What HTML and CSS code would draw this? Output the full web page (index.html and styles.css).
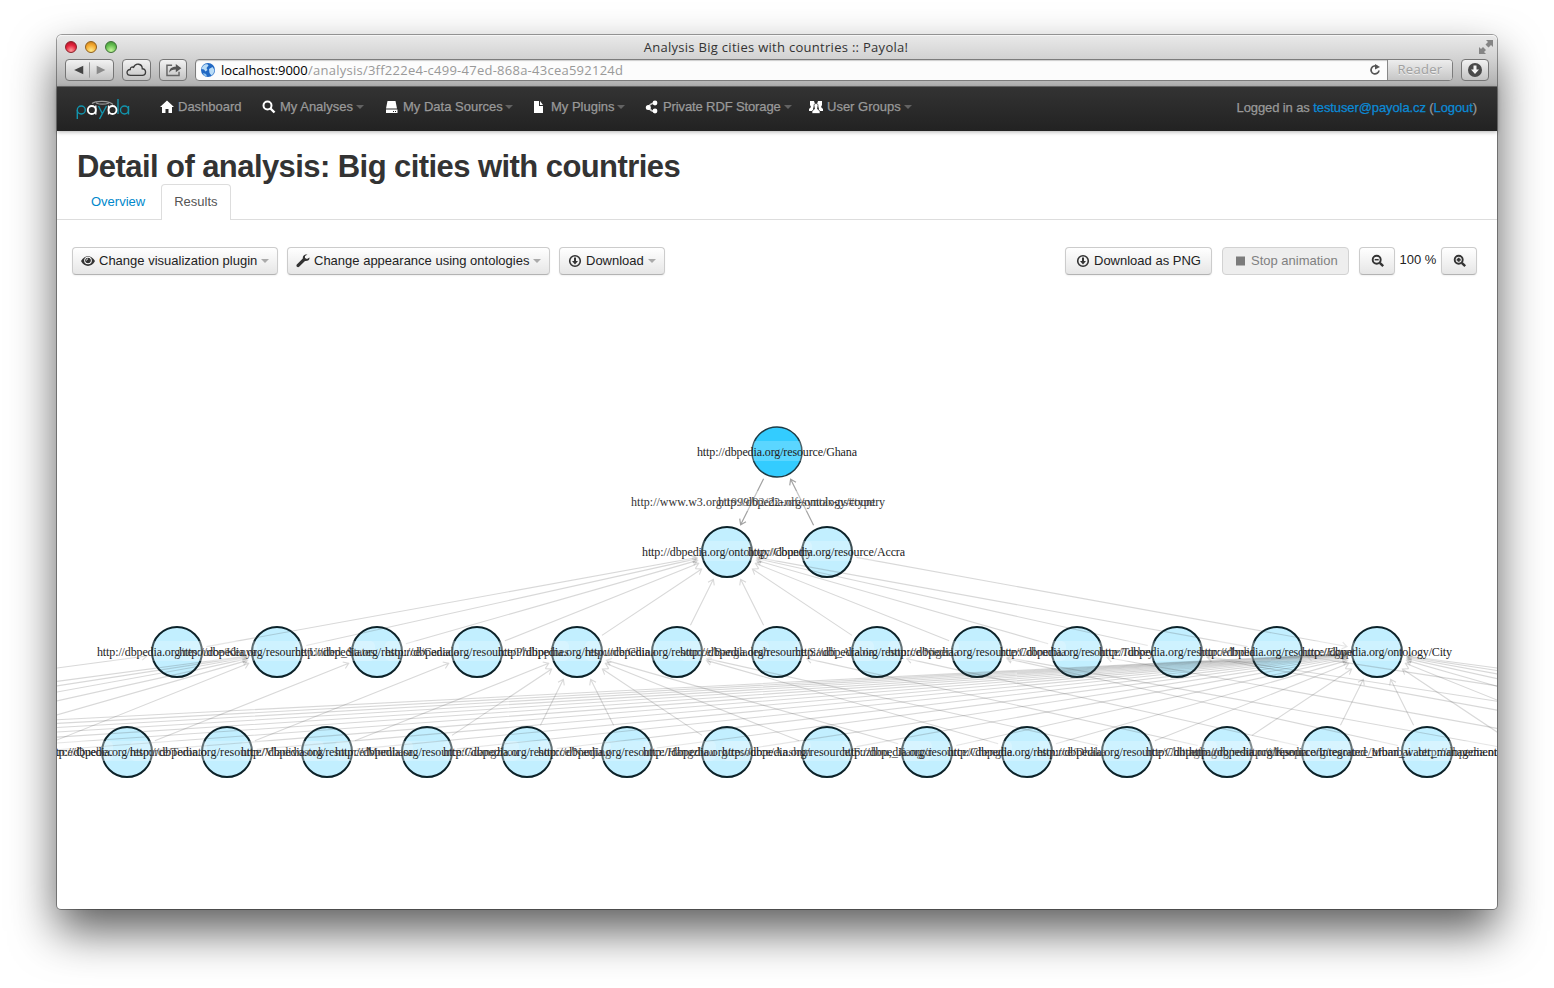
FILE: index.html
```
<!DOCTYPE html>
<html lang="en">
<head>
<meta charset="utf-8">
<title>Analysis Big cities with countries :: Payola!</title>
<link rel="stylesheet" href="styles.css">
</head>
<body>
<div class="window">
  <header class="chrome">
    <div class="titlebar">
      <div class="lights"><i class="light red"></i><i class="light amber"></i><i class="light green"></i></div>
      <div class="title"><span>Analysis Big cities with countries :: Payola!</span></div>
      <svg class="expand" width="14" height="14" viewBox="0 0 14 14" fill="#858585"><path d="M7 0h7v7l-2-2-2.500 2.500-3-3L9 2zM0 7l2 2 2-2 3 3-2 2 2 2H0z"/></svg>
    </div>
    <div class="tools">
      <div class="cbtn nav-pair">
        <svg width="49" height="22" viewBox="0 0 49 22"><path d="M18 6.500v9L8.500 11z" fill="#444"/><path d="M32 6.500v9l9-4.500z" fill="#8a8a8a"/><path d="M24.500 3v16" stroke="#999"/></svg>
      </div>
      <div class="cbtn cloud">
        <svg width="28" height="20" viewBox="0 0 28 20" fill="none" stroke="#3d3d3d" stroke-width="1.400"><path d="M8 15.500c-5 0-5-6-.5-6 0-2.500 2-3 3.500-2.300 2-5 9-4 9 1.500 4.500-.2 4.500 6.800 0 6.800z"/></svg>
      </div>
      <div class="cbtn share">
        <svg width="28" height="20" viewBox="0 0 28 20"><path d="M13 5H7.500v11h13v-4" fill="none" stroke="#666" stroke-width="1.600"/><path d="M10 13c0-4 2-6.500 7-6.500V3.500L23 8l-6 4.500V9.500c-4 0-5.500 1-7 3.500z" fill="#555"/></svg>
      </div>
      <div class="address">
        <svg class="globe" width="16" height="16" viewBox="0 0 16 16"><circle cx="8" cy="8" r="7" fill="#2269c4"/><path d="M2.500 4.500C5 1.500 8 2 8.500 3.500L6.500 6l1 2-2 1.500-1.500-2L1.500 7zM9 7l3.500-2 2 3-1 3.500-2 2L9.500 11z" fill="#b9dcf7"/><path d="M3 11l3 1 1 2.500-3-1z" fill="#8fc3ee"/></svg>
        <span class="host">localhost:9000</span><span class="path">/analysis/3ff222e4-c499-47ed-868a-43cea592124d</span>
        <svg class="reload" width="12" height="12" viewBox="0 0 12 12"><path d="M8.500 2.800A4 4 0 1 0 10 6.500" fill="none" stroke="#555" stroke-width="1.700"/><path d="M6 0l5 3-5 2.500z" fill="#555"/></svg>
        <div class="reader">Reader</div>
      </div>
      <div class="cbtn dl">
        <svg width="26" height="20" viewBox="0 0 26 20"><circle cx="13" cy="10" r="7" fill="#4a4a4a"/><path d="M11.500 5.500h3V9.500H17L13 14 9 9.500h2.500z" fill="#f4f4f4"/></svg>
      </div>
    </div>
  </header>
  <nav class="navbar">
    <svg class="logo" width="56" height="24" viewBox="0 0 56 24" role="img" aria-label="payola">
      <g fill="none" stroke="#1295ae" stroke-width="1.400"><circle cx="5.300" cy="12" r="4"/><path d="M1.300 12v9M22.500 8l4 8M30.500 8l-7 13M42 1v15"/><circle cx="48.500" cy="12" r="4"/><path d="M52.500 8v8.500"/></g>
      <g fill="none" stroke="#fff" stroke-width="1.800"><circle cx="15.800" cy="12" r="4"/><circle cx="36.500" cy="12" r="4"/><path d="M19.800 7.500v9M32.500 7.500v9" stroke-width="1.300"/></g>
      <path d="M16 5.500c4-3 17-3 21 1M20 5c4 1.500 9 1.500 13 0" fill="none" stroke="#999" stroke-width="1.200"/>
    </svg>
    <a class="item w1"><svg width="14" height="14" viewBox="0 0 14 14" fill="#fff"><path d="M7 .5l7 6.500h-2v6H8.500V9h-3v4H2V7H0z"/></svg><span>Dashboard</span></a>
    <a class="item w2"><svg width="14" height="14" viewBox="0 0 14 14"><circle cx="5.500" cy="5.500" r="4" fill="none" stroke="#fff" stroke-width="2"/><path d="M8.500 8.500l4 4" stroke="#fff" stroke-width="2.400"/></svg><span>My Analyses</span><i class="caret"></i></a>
    <a class="item w3"><svg width="14" height="14" viewBox="0 0 14 14" fill="#fff"><path d="M2.500 1h8L12 8.500H1zM1 9.500h11.500V13H1z"/><path d="M8 11h1v1H8zM10 11h1v1h-1z" fill="#222"/></svg><span>My Data Sources</span><i class="caret"></i></a>
    <a class="item w4"><svg width="14" height="14" viewBox="0 0 14 14" fill="#fff"><path d="M1 1h5v5h4v7H1zM7 1l3 4H7z"/></svg><span>My Plugins</span><i class="caret"></i></a>
    <a class="item w5"><svg width="14" height="14" viewBox="0 0 14 14" fill="#fff"><path d="M10 3C6 3 3 7 3 7s3 4.500 7 4.500" fill="none" stroke="#ccc" stroke-width="1.600"/><circle cx="10" cy="3" r="2.400"/><circle cx="3.300" cy="7.500" r="2.500"/><circle cx="10" cy="11" r="2.400"/></svg><span>Private RDF Storage</span><i class="caret"></i></a>
    <a class="item w6"><svg width="14" height="14" viewBox="0 0 14 14" fill="#fff"><path d="M1 1h4l1 3-1 2-1 3 1 2H0V9l2-2-1-2zM9 1h4v4l-1 2 2 2v2H9l1-2-1-3-1-2z"/><path d="M5 5.500c0-2.600 4-2.600 4 0L8.500 9l2.500 2v2.500H3V11l2.500-2z" stroke="#282828" stroke-width=".7"/></svg><span>User Groups</span><i class="caret"></i></a>
    <div class="login">Logged in as <a>testuser@payola.cz</a> (<a>Logout</a>)</div>
  </nav>
  <main>
    <h1><span>Detail of analysis: Big cities with countries</span></h1>
    <div class="tabs"><a class="tab">Overview</a><a class="tab active">Results</a></div>
    <div class="toolbar">
      <button class="btn b1"><svg width="14" height="14" viewBox="0 0 14 14"><path d="M0 7c3.500-6.500 10.500-6.500 14 0-3.500 6.500-10.500 6.500-14 0z" fill="#333"/><circle cx="7" cy="6.500" r="3.800" fill="#fff"/><circle cx="7" cy="6.500" r="2.800" fill="#333"/><path d="M5.500 6.500c0-1 .6-1.500 1.500-1.500" stroke="#fff" fill="none"/></svg><span>Change visualization plugin</span><i class="caret"></i></button>
      <button class="btn b2"><svg width="14" height="14" viewBox="0 0 14 14"><path d="M13.500 3.500l-2.500 1.500-2-1 0-2L11.500.5C8.500 0 6.500 1.500 6.800 4.500L.8 10.500c-1.200 1.500.8 3.500 2.300 2.300L9 7c3 .3 4.800-1.200 4.500-3.500z" fill="#333"/></svg><span>Change appearance using ontologies</span><i class="caret"></i></button>
      <button class="btn b3"><svg width="14" height="14" viewBox="0 0 14 14"><circle cx="7" cy="7" r="5.300" fill="none" stroke="#333" stroke-width="1.600"/><path d="M6 3.500h2V7h2l-3 3.500L4 7h2z" fill="#333"/></svg><span>Download</span><i class="caret"></i></button>
      <div class="grow"></div>
      <button class="btn b4"><svg width="14" height="14" viewBox="0 0 14 14"><circle cx="7" cy="7" r="5.300" fill="none" stroke="#333" stroke-width="1.600"/><path d="M6 3.500h2V7h2l-3 3.500L4 7h2z" fill="#333"/></svg><span>Download as PNG</span></button>
      <button class="btn b5 disabled"><svg width="14" height="14" viewBox="0 0 14 14"><path d="M3 2.500h9v9H3z" fill="#7b7b7b"/></svg><span>Stop animation</span></button>
      <button class="btn b6"><svg width="14" height="14" viewBox="0 0 14 14" fill="none" stroke="#333"><circle cx="5.700" cy="5.700" r="4" stroke-width="1.900"/><path d="M8.800 8.800l3.400 3.400" stroke-width="2.400"/><path d="M3.700 5.700h4" stroke-width="1.500"/></svg></button>
      <span class="pct">100 %</span>
      <button class="btn b7"><svg width="14" height="14" viewBox="0 0 14 14" fill="none" stroke="#333"><circle cx="5.700" cy="5.700" r="4" stroke-width="1.900"/><path d="M8.800 8.800l3.400 3.400" stroke-width="2.400"/><path d="M3.700 5.700h4M5.700 3.700v4" stroke-width="1.900"/></svg></button>
    </div>
    <svg class="graph" id="graph" width="1440" height="634" viewBox="57 275 1440 634"></svg>
  </main>
</div>
<script src="graph.js"></script>
</body>
</html>
```
FILE: styles.css
```
* { box-sizing: border-box; }
body { margin: 0; padding: 35px 0 0 57px; height: 988px; background: #fff; overflow: hidden; font: 13px/18px "Liberation Sans", Arial, sans-serif; color: #333; }
.window {
  width: 1440px; height: 874px; border-radius: 5px 5px 4px 4px; background: #fff;
  box-shadow: 0 0 0 1px rgba(0,0,0,.36), 0 22px 46px rgba(0,0,0,.64);
}
.window > main { overflow: hidden; }
.chrome {
  height: 52px; border-radius: 5px 5px 0 0; background: linear-gradient(#e9e9e9, #d3d3d3 45%, #b0b0b0);
  border-bottom: 1px solid #6b6b6b; box-shadow: inset 0 1px #f6f6f6;
  font-family: "Open Sans", "Noto Sans", sans-serif;
}
.titlebar { display: flex; height: 23px; padding: 0 4px 0 8px; align-items: center; }
.lights { display: flex; gap: 8px; width: 60px; }
.light { width: 12px; height: 12px; border-radius: 50%; border: 1px solid #6d5a4a; }
.red { background: radial-gradient(circle at 50% 85%, #ff9d9d, #e4233c 55%, #a10f22); border-color: #8c2029; }
.amber { background: radial-gradient(circle at 50% 85%, #ffeb8a, #f2a52c 60%, #b9771a); border-color: #8f5f1c; }
.green { background: radial-gradient(circle at 50% 85%, #c5f79c, #60bb4c 60%, #3d8a34); border-color: #3d6f35; }
.title { flex: 1; text-align: center; color: #333; font-size: 13px; padding-right: 52px; padding-top: 1px; white-space: nowrap; letter-spacing: .29px; }
.expand { margin-top: 1px; }
.tools { display: flex; height: 24px; padding: 0 8px; align-items: center; }
.cbtn { height: 22px; border: 1px solid #757575; border-radius: 4px; background: linear-gradient(#f2f2f2, #c3c3c3); display: flex; align-items: center; justify-content: center; overflow: hidden; }
.nav-pair { width: 49px; margin-right: 8px; }
.cloud { width: 29px; margin-right: 8px; }
.share { width: 28px; margin-right: 8px; }
.dl { width: 28px; margin-left: 8px; }
.address { flex: 1; height: 22px; display: flex; align-items: center; border: 1px solid #7c7c7c; border-radius: 4px; background: #fcfcfc; box-shadow: inset 0 1px 1px #ccc; overflow: hidden; padding-left: 4px; font-size: 13px; white-space: nowrap; }
.globe { margin-right: 5px; }
.host { color: #000; width: 87px; letter-spacing: -.08px; }
.path { color: #999; flex: 1; letter-spacing: .25px; }
.reload { margin-right: 6px; }
.reader { width: 65px; height: 22px; border-left: 1px solid #888; background: linear-gradient(#efefef, #c4c4c4); color: #a0a0a0; text-align: center; line-height: 20px; letter-spacing: .3px; text-shadow: 0 1px #eee; }
.navbar { height: 44px; display: flex; background: linear-gradient(#333, #222); color: #999; padding: 0 20px 5px 19px; align-items: center; box-shadow: 0 1px 4px rgba(0,0,0,.3); -webkit-text-stroke: .25px; }
.logo { width: 56px; margin-right: 28px; margin-top: 6px; }
.item { display: flex; align-items: center; white-space: nowrap; }
.item span { margin-left: 4px; }
.item svg { flex: none; }
.w1 { width: 102px; }
.w2 { width: 123px; }
.w3 { width: 148px; }
.w4 { width: 112px; }
.w3 .caret, .w4 .caret { margin-left: 2px; }
.w5 { width: 164px; letter-spacing: -.12px; }
.caret { border: 4px solid transparent; border-top-color: #626262; border-bottom: 0; margin-left: 3px; margin-top: 1px; }
.login { margin-left: auto; margin-top: 2px; white-space: nowrap; letter-spacing: -.1px; }
.login a { color: #0b8ad6; }
h1 { margin: 0; padding: 15px 0 0 20px; height: 53px; font-size: 31px; line-height: 42px; letter-spacing: -.57px; white-space: nowrap; }
.tabs { display: flex; height: 36px; padding-left: 21px; border-bottom: 1px solid #ddd; }
.tab { height: 36px; padding: 9px 13px 0; color: #08c; }
.tab.active { width: 70px; padding: 8px 12px 0; margin-left: 3px; background: #fff; color: #555; border: 1px solid #ddd; border-bottom: 0; border-radius: 4px 4px 0 0; }
.toolbar { display: flex; height: 55px; padding: 27px 20px 0 15px; }
.btn { display: flex; align-items: center; height: 28px; padding: 0 8px 1px; border: 1px solid #ccc; border-bottom-color: #b3b3b3; border-radius: 4px; background: linear-gradient(#fff, #e6e6e6); font: 13px/18px "Liberation Sans", Arial, sans-serif; color: #222; white-space: nowrap; box-shadow: 0 1px 2px rgba(0,0,0,.06); }
.btn span { margin-left: 4px; }
.btn .caret { border-top-color: #aaa; margin-left: 4px; }
.btn svg { flex: none; }
.b1 { width: 206px; margin-right: 9px; }
.b2 { width: 263px; margin-right: 9px; }
.b3 { width: 106px; }
.grow { flex: 1; }
.b4 { width: 147px; margin-right: 10px; padding-left: 10px; }
.b5 { width: 127px; margin-right: 10px; padding-left: 10px; }
.b6, .b7 { width: 36px; padding-left: 11px; }
.disabled { background: #eee; color: #808080; border-color: #d2d2d2; box-shadow: none; }
.pct { width: 46px; text-align: center; line-height: 26px; color: #222; }
.graph { display: block; }
.graph text { font: 12px "Liberation Serif", "Times New Roman", serif; fill: #222; }
.node { fill: #c2efff; stroke: #0c2229; stroke-width: 2; }
.node.selected { fill: #33ccff; stroke: #1d3b45; stroke-width: 1.500; }
.edge { fill: none; stroke: rgba(70,70,70,.21); stroke-width: 1.100; }
.edge.strong { stroke: rgba(70,70,70,.5); stroke-width: 1.200; }
.plate { fill: rgba(255,255,255,.2); }
.graph .edge-label { fill: #333; }
```
FILE: graph.js
```
const svg = document.getElementById('graph');
const NS = 'http://www.w3.org/2000/svg';
function add(tag, attrs, text) {
  const el = document.createElementNS(NS, tag);
  for (const k in attrs) el.setAttribute(k, attrs[k]);
  if (text) el.textContent = text;
  svg.appendChild(el);
}
const R = 'http://dbpedia.org/resource/';
const ghana = [777, 452], country = [727, 552], accra = [827, 552], city = [1377, 652];
const mid = x => [x, 652], low = x => [x, 752];

// Each label: text, left edge, width
const nodes = [
  [country, 'http://dbpedia.org/ontology/Country', 642, 170],
  [accra, R + 'Accra', 748, 157]
];
[['Kenya', 97, 160], ['United_States', 179, 196], ['Canada', 295, 164], ['Philippines', 385, 184],
 ['China', 498, 158], ['Bangladesh', 585, 184], ['Saudi_Arabia', 680, 194], ['Nigeria', 795, 164],
 ['Colombia', 888, 178], ['Turkey', 1000, 154], ['India', 1099, 156], ['Egypt', 1199, 156]
].forEach((n, i) => nodes.push([mid(177 + i * 100), R + n[0], n[1], n[2]]));
nodes.push([city, 'http://dbpedia.org/ontology/City', 1302, 150]);
nodes.push([low(27), R + 'Quebec', -59, 172]);
nodes.push([low(1527), R + 'Shanghai', 1418, 178]);
[['Toronto', 47, 160], ['Vladivostok', 130, 194], ['Mombasa', 241, 172], ['Guangzhou', 335, 184],
 ['Nanjing', 443, 168], ['Hangzhou', 538, 178], ['Anshun', 643, 168], ['Fuzhou,_Jiangxi', 722, 210],
 ['Chengde', 842, 170], ['Dhaka', 948, 158], ['Chittagong', 1037, 180], ['Kanpur', 1146, 164],
 ['Mumbai', 1243, 168], ['Integrated_urban_water_management', 1189, 308]
].forEach((n, i) => nodes.push([low(127 + i * 100), R + n[0], n[1], n[2]]));

const edges = [[ghana, country, 1], [accra, ghana, 1], [accra, city]];
for (let x = 177; x <= 1277; x += 100) edges.push([mid(x), country]);
for (let x = -573; x <= 2127; x += 100) edges.push([low(x), city]);
const parents = {
  177: [-573], 277: [-473, -373, -273, -173, -73, 27], 377: [127], 477: [227],
  577: [327, 427, 527, 627, 727, 827, 927], 677: [1027, 1127], 777: [1227], 877: [1327],
  977: [1427, 1527], 1077: [1627], 1177: [1727, 1827], 1277: [1927]
};
for (const p in parents) parents[p].forEach(x => edges.push([low(x), mid(+p)]));

function drawNode(p, cls) { add('circle', { cx: p[0], cy: p[1], r: 25, class: cls }); }
drawNode(ghana, 'node selected');
nodes.forEach(n => drawNode(n[0], 'node'));

edges.forEach(([a, b, strong]) => {
  const dx = b[0] - a[0], dy = b[1] - a[1], len = Math.hypot(dx, dy);
  const ux = dx / len, uy = dy / len;
  const sx = a[0] + ux * 30, sy = a[1] + uy * 30, tx = b[0] - ux * 30.5, ty = b[1] - uy * 30.5;
  const wing = s => [tx - 5 * ux + s * 3.500 * uy, ty - 5 * uy - s * 3.500 * ux].join(' ');
  add('path', { d: `M${sx} ${sy}L${tx} ${ty}M${wing(1)}L${tx} ${ty}L${wing(-1)}`, class: strong ? 'edge strong' : 'edge' });
});

function label(text, x, y, w, cls) {
  add('rect', { x, y: y - 11, width: w, height: 20, rx: 5, class: 'plate' });
  add('text', { x, y: y + 4, textLength: w, class: cls }, text);
}
label('http://www.w3.org/1999/02/22-rdf-syntax-ns#type', 631, 502, 244, 'edge-label');
label('http://dbpedia.org/ontology/country', 718, 502, 167, 'edge-label');
label(R + 'Ghana', 697, 452, 160, '');
nodes.forEach(n => label(n[1], n[2], n[0][1], n[3], ''));
```
